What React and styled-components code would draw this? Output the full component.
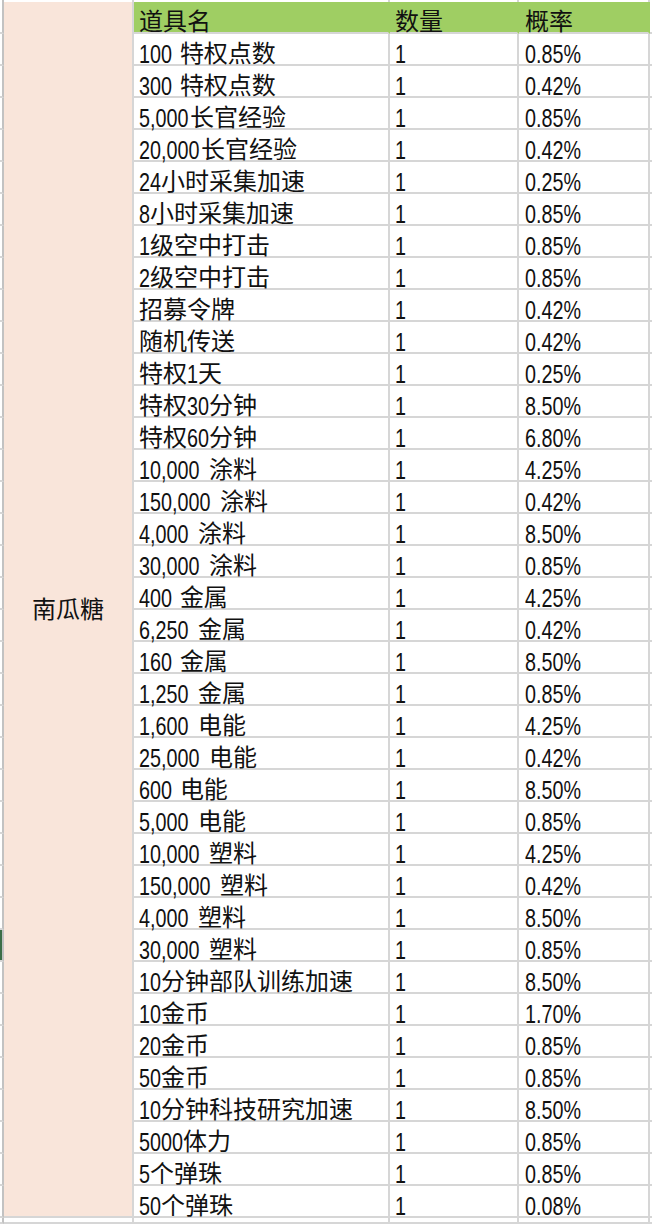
import React from 'react'
import styled, { createGlobalStyle } from 'styled-components'

const GlobalStyle = createGlobalStyle`
    html, body {
        margin:0;
        padding:0;
        background:#fff;
    }
    body {
        font-family:"Noto Sans CJK SC", "Liberation Sans", sans-serif;
        color:#111;
    }
`

const items = [
    ['100 特权点数', '1', '0.85%'],
    ['300 特权点数', '1', '0.42%'],
    ['5,000长官经验', '1', '0.85%'],
    ['20,000长官经验', '1', '0.42%'],
    ['24小时采集加速', '1', '0.25%'],
    ['8小时采集加速', '1', '0.85%'],
    ['1级空中打击', '1', '0.85%'],
    ['2级空中打击', '1', '0.85%'],
    ['招募令牌', '1', '0.42%'],
    ['随机传送', '1', '0.42%'],
    ['特权1天', '1', '0.25%'],
    ['特权30分钟', '1', '8.50%'],
    ['特权60分钟', '1', '6.80%'],
    ['10,000 涂料', '1', '4.25%'],
    ['150,000 涂料', '1', '0.42%'],
    ['4,000 涂料', '1', '8.50%'],
    ['30,000 涂料', '1', '0.85%'],
    ['400 金属', '1', '4.25%'],
    ['6,250 金属', '1', '0.42%'],
    ['160 金属', '1', '8.50%'],
    ['1,250 金属', '1', '0.85%'],
    ['1,600 电能', '1', '4.25%'],
    ['25,000 电能', '1', '0.42%'],
    ['600 电能', '1', '8.50%'],
    ['5,000 电能', '1', '0.85%'],
    ['10,000 塑料', '1', '4.25%'],
    ['150,000 塑料', '1', '0.42%'],
    ['4,000 塑料', '1', '8.50%'],
    ['30,000 塑料', '1', '0.85%'],
    ['10分钟部队训练加速', '1', '8.50%'],
    ['10金币', '1', '1.70%'],
    ['20金币', '1', '0.85%'],
    ['50金币', '1', '0.85%'],
    ['10分钟科技研究加速', '1', '8.50%'],
    ['5000体力', '1', '0.85%'],
    ['5个弹珠', '1', '0.85%'],
    ['50个弹珠', '1', '0.08%'],
]

const activeRow = 28

// the sheet's latin glyphs are tall and narrow, so squeeze arial a bit
const SQUEEZE = 0.76
const LATIN_SIZE = 26
const advance = { ',': 0.36, '.': 0.278, '%': 0.65, ' ': 0.4 }
const latinWidth = s => s.split('').reduce((w, c) => w + (advance[c] ?? 0.556), 0) * LATIN_SIZE

const Sheet = styled.div`
    display:grid;
    grid-template-columns:4px 130px 256px 129px 131px 2px;
    grid-template-rows:2px 32px repeat(${items.length}, 32px) 6px;
    width:652px;
    height:1224px;
    overflow:hidden;
    font-size:24px;
`
const Cell = styled.div`
    box-sizing:border-box;
    display:flex;
    align-items:flex-end;
    padding:0 0 0 ${p => p.$pad || 5}px;
    line-height:25px;
    white-space:nowrap;
    background:#fff;
    border-right:${p => p.$last ? 'none' : '2px solid #d6d6d6'};
    border-bottom:${p => p.$top ? 'none' : '2px solid #d6d6d6'};
`
const RowStub = styled.div`
    box-sizing:border-box;
    background:${p => p.$active ? '#3c6e47' : '#fff'};
    border-right:2px solid #c2c2c2;
    border-bottom:${p => p.$top ? 'none' : '2px solid #d6d6d6'};
`
const HeadCell = styled(Cell)`
    background:#9fce63;
    border-right-color:#9fce63;
`
const Group = styled.div`
    box-sizing:border-box;
    grid-column:2;
    grid-row:2 / span ${items.length + 1};
    display:flex;
    align-items:center;
    justify-content:center;
    background:#f9e5da;
    border-right:2px solid #d6d6d6;
    border-bottom:2px solid #d6d6d6;
    padding:0 0 4px 0;
`
const Latin = styled.span`
    display:inline-block;
    font-family:"Liberation Sans", Arial, sans-serif;
    font-size:${LATIN_SIZE}px;
    line-height:20px;
    white-space:pre;
    transform:scaleX(${SQUEEZE});
    transform-origin:0 0;
    width:${p => p.$w}px;
    margin-right:${p => -p.$w * (1 - SQUEEZE)}px;
`

function Text({ value }) {
    const parts = value.split(/([\x20-\x7e]+)/)
    return parts.map((part, i) =>
        i % 2 === 1
            ? <Latin key={i} $w={latinWidth(part)}>{part}</Latin>
            : part
    )
}

export default function App() {
    return (
        <>
            <GlobalStyle />
            <Sheet>
                <RowStub $top />
                <Cell $top />
                <Cell $top />
                <Cell $top />
                <Cell $top />
                <Cell $top $last />

                <RowStub />
                <Group>南瓜糖</Group>
                <HeadCell>道具名</HeadCell>
                <HeadCell>数量</HeadCell>
                <HeadCell $pad={6}>概率</HeadCell>
                <Cell $last />

                {items.map((row, i) => (
                    <React.Fragment key={i}>
                        <RowStub $active={i === activeRow} />
                        <Cell><Text value={row[0]} /></Cell>
                        <Cell><Text value={row[1]} /></Cell>
                        <Cell $pad={6}><Text value={row[2]} /></Cell>
                        <Cell $last />
                    </React.Fragment>
                ))}

                <RowStub />
                <Cell />
                <Cell />
                <Cell />
                <Cell />
                <Cell $last />
            </Sheet>
        </>
    )
}
